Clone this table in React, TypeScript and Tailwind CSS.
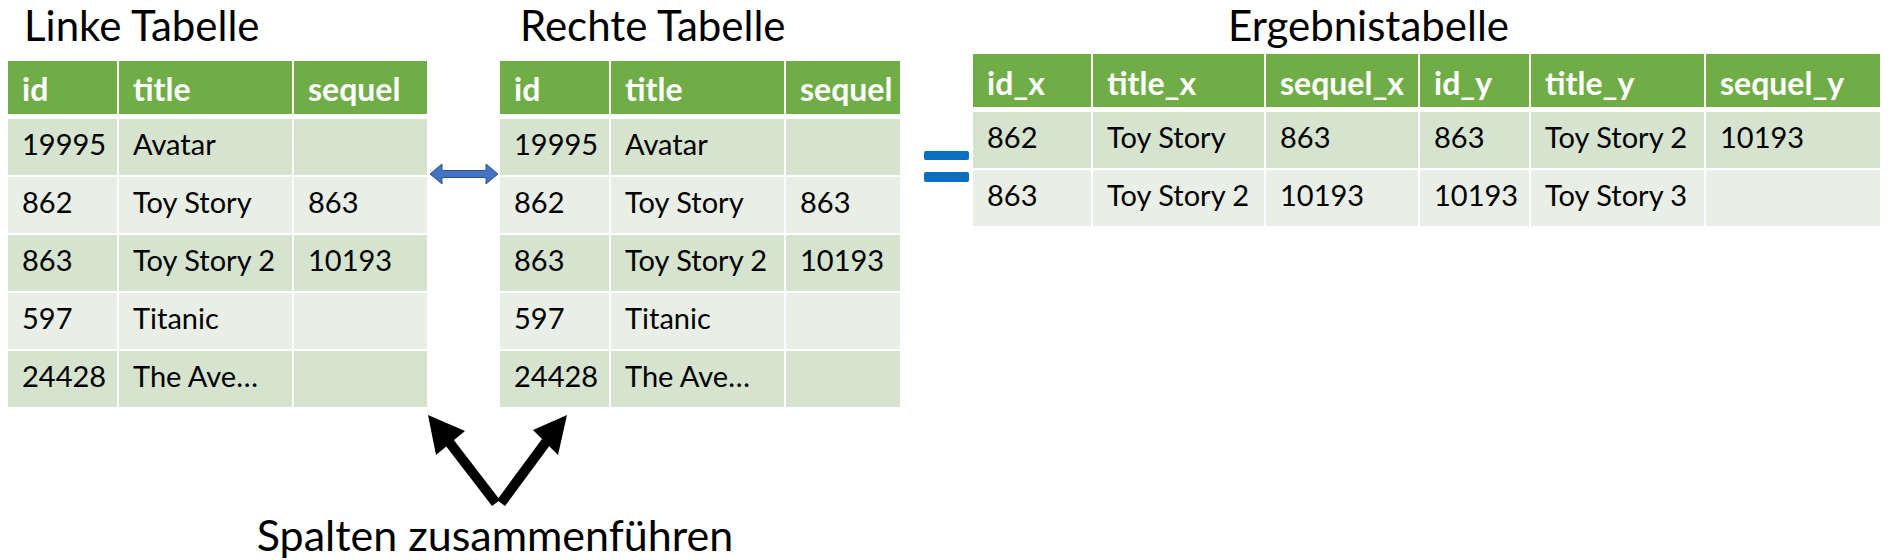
import React from "react";

type Row = string[];

const leftRows: Row[] = [
  ["19995", "Avatar", ""],
  ["862", "Toy Story", "863"],
  ["863", "Toy Story 2", "10193"],
  ["597", "Titanic", ""],
  ["24428", "The Ave…", ""],
];

const resultRows: Row[] = [
  ["862", "Toy Story", "863", "863", "Toy Story 2", "10193"],
  ["863", "Toy Story 2", "10193", "10193", "Toy Story 3", ""],
];

interface TableProps {
  headers: string[];
  widths: string[];
  rows: Row[];
  headerPad?: string;
}

function DataTable({ headers, widths, rows, headerPad = "pt-[9px]" }: TableProps) {
  return (
    <div className="flex flex-col">
      {/* header */}
      <div className="flex gap-[2px]">
        {headers.map((h, i) => (
          <div
            key={h}
            className={`${widths[i]} h-[53px] ${headerPad} pl-[14px] bg-[#70ad47] text-white font-bold text-[32px] leading-[38px] whitespace-nowrap`}
          >
            {h}
          </div>
        ))}
      </div>
      <div className="mt-[5px] flex flex-col gap-[2px]">
        {rows.map((row, r) => (
          <div key={r} className="flex gap-[2px]">
            {row.map((cell, i) => (
              <div
                key={i}
                className={`${widths[i]} h-[56px] pt-[7px] pl-[14px] text-black text-[29px] leading-[35px] whitespace-nowrap ${
                  r % 2 === 0 ? "bg-[#d5e3cf]" : "bg-[#e9efe7]"
                }`}
              >
                {cell}
              </div>
            ))}
          </div>
        ))}
      </div>
    </div>
  );
}

function DoubleArrow() {
  return (
    <svg width="70" height="22" viewBox="0 0 70 22">
      <polygon
        points="1,11 13,1 13,7.5 57,7.5 57,1 69,11 57,21 57,14.5 13,14.5 13,21"
        fill="#4472c4"
        stroke="#2f528f"
        strokeWidth="1"
      />
    </svg>
  );
}

function MergeArrows() {
  return (
    <svg width="150" height="100" viewBox="0 0 150 100">
      <line x1="76" y1="92" x2="26" y2="27" stroke="#000" strokeWidth="10" />
      <polygon points="8,4 45,20 16,44" fill="#000" />
      <line x1="81" y1="92" x2="129" y2="27" stroke="#000" strokeWidth="10" />
      <polygon points="147,4 113,19 138,44" fill="#000" />
    </svg>
  );
}

export default function App() {
  return (
    <div className="w-[1888px] h-[560px] overflow-hidden bg-white font-['Lato','Noto_Sans',sans-serif] text-black">
      <div className="flex items-start">
        {/* Linke Tabelle */}
        <div className="ml-[8px] w-[419px]">
          <div className="pl-[16px] text-[42px] leading-[51px] whitespace-nowrap">Linke Tabelle</div>
          <div className="mt-[10px]">
            <DataTable
              headers={["id", "title", "sequel"]}
              widths={["w-[109px]", "w-[173px]", "w-[133px]"]}
              rows={leftRows}
            />
          </div>
        </div>

        <div className="w-[73px] pt-[163px] pl-[2px]">
          <DoubleArrow />
        </div>

        {/* Rechte Tabelle */}
        <div className="w-[400px]">
          <div className="pl-[20px] text-[42px] leading-[51px] whitespace-nowrap">Rechte Tabelle</div>
          <div className="mt-[10px]">
            <DataTable
              headers={["id", "title", "sequel"]}
              widths={["w-[109px]", "w-[173px]", "w-[114px]"]}
              rows={leftRows}
            />
          </div>
        </div>

        <div className="w-[73px] pt-[151px] pl-[24px] flex flex-col gap-[12px]">
          <div className="w-[45px] h-[9px] rounded-[2px] bg-[#0b6fc0]" />
          <div className="w-[45px] h-[10px] rounded-[2px] bg-[#0b6fc0]" />
        </div>

        {/* Ergebnistabelle */}
        <div className="w-[907px]">
          <div className="pl-[255px] text-[42px] leading-[51px] whitespace-nowrap">Ergebnistabelle</div>
          <div className="mt-[3px]">
            <DataTable
              headers={["id_x", "title_x", "sequel_x", "id_y", "title_y", "sequel_y"]}
              widths={["w-[118px]", "w-[171px]", "w-[152px]", "w-[109px]", "w-[173px]", "w-[174px]"]}
              rows={resultRows}
              headerPad="pt-[10px]"
            />
          </div>
        </div>
      </div>

      {/* Spalten zusammenführen */}
      <div className="ml-[258px] w-[474px] flex flex-col items-center">
        <div className="mt-[4px]">
          <MergeArrows />
        </div>
        <div className="text-[43px] leading-[47px] whitespace-nowrap">Spalten zusammenführen</div>
      </div>
    </div>
  );
}
